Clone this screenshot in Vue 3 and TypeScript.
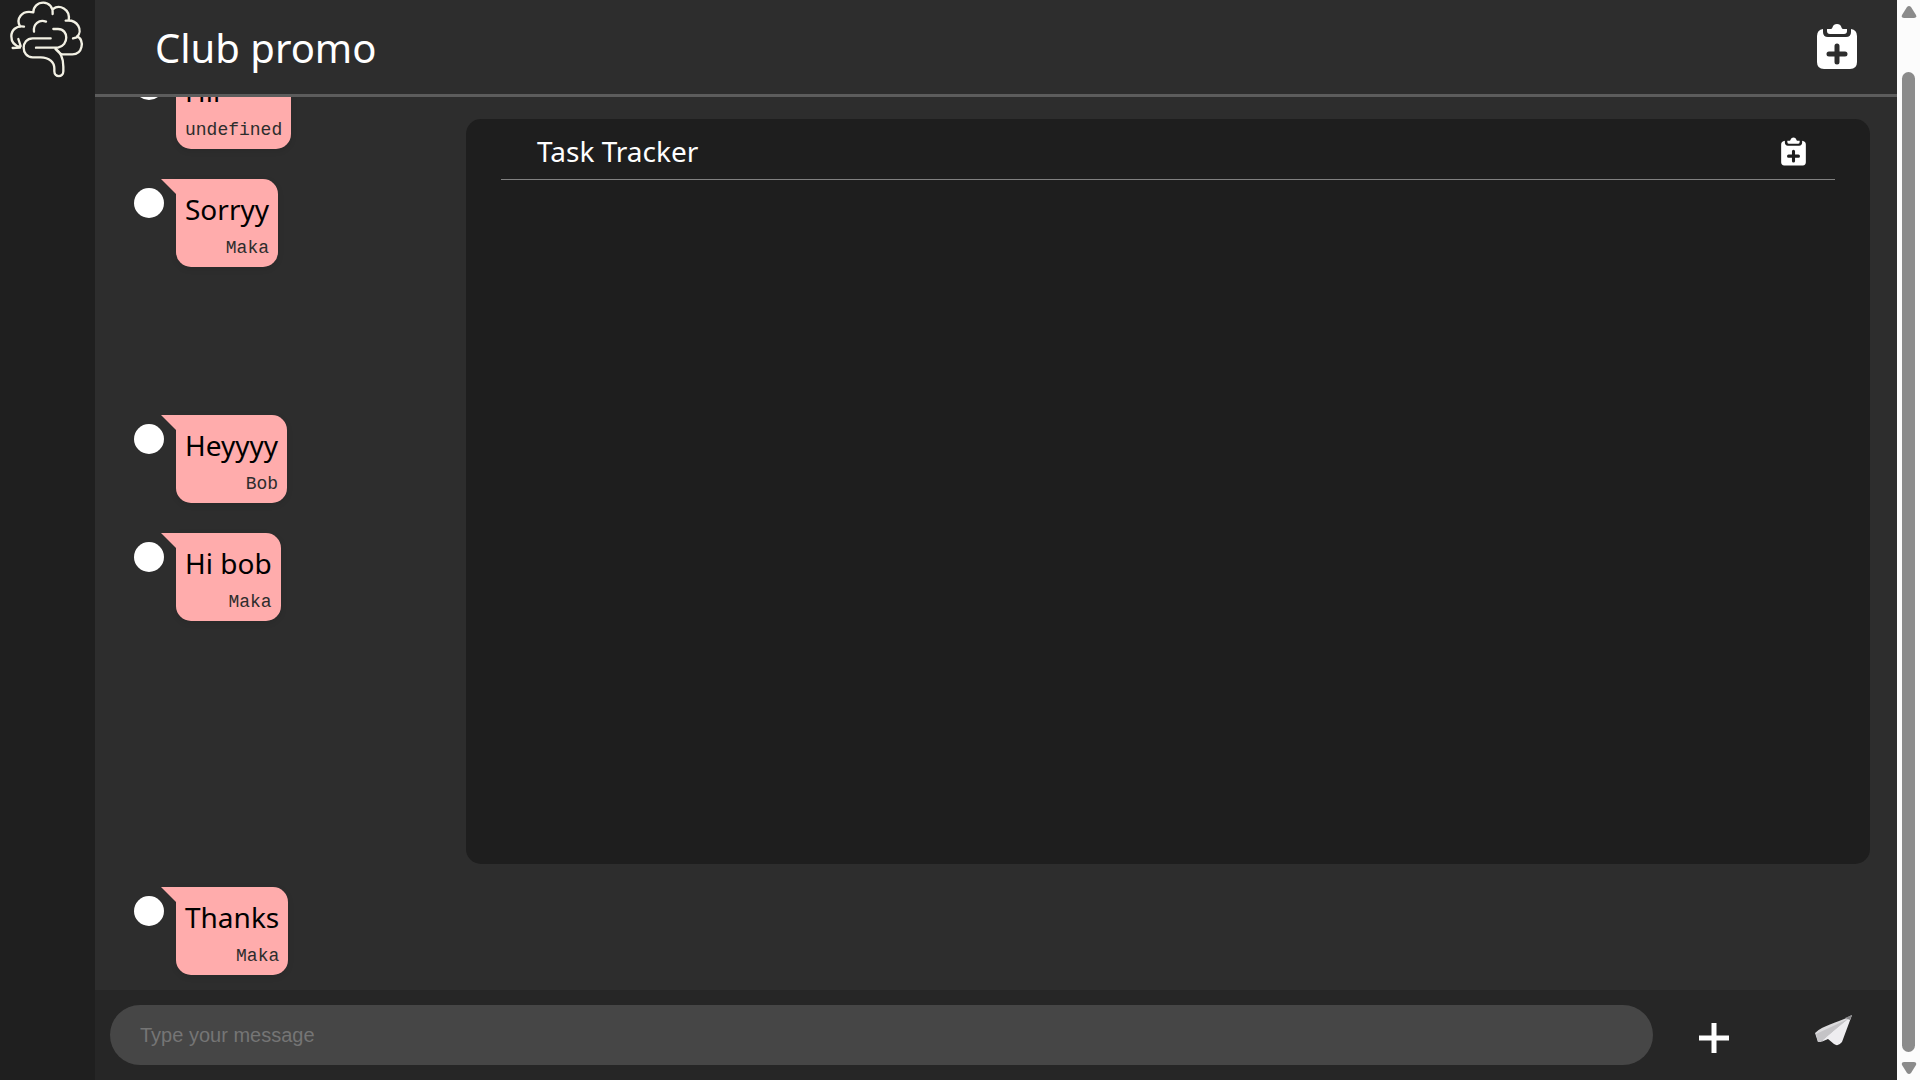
<script setup lang="ts">
import { ref } from 'vue'

interface Message {
  id: number
  text: string
  sender: string
  visible: boolean
}

const messages: Message[] = [
  { id: 1, text: 'Hii', sender: 'undefined', visible: true },
  { id: 2, text: 'Sorryy', sender: 'Maka', visible: true },
  { id: 3, text: '', sender: '', visible: false },
  { id: 4, text: 'Heyyyy', sender: 'Bob', visible: true },
  { id: 5, text: 'Hi bob', sender: 'Maka', visible: true },
  { id: 6, text: '', sender: '', visible: false },
  { id: 7, text: '', sender: '', visible: false },
  { id: 8, text: 'Thanks', sender: 'Maka', visible: true },
]

const draft = ref('')
</script>

<template>
  <div class="app">
    <aside class="sidebar">
      <svg class="logo" viewBox="0 0 285 270" aria-hidden="true">
        <g fill="none" stroke="#f3f1e4" stroke-width="7" stroke-linecap="round" stroke-linejoin="round">
          <path d="M72 80C48 76 34 91 34 109C34 125 43 137 60 141M38 144L60 143M55 117L62 138" />
          <path d="M60 79C48 58 63 29 100 37C100 20 113 8 130 8C147 8 160 22 158 42" />
          <path d="M159 27C177 13 212 25 206 62M197 62C233 57 251 92 230 112L219 115" />
          <path d="M232 109C254 123 248 163 217 163H188C180 163 175 155 167 147" />
          <path d="M102 95C99 73 117 57 138 65" />
          <path d="M160 87H174C207 87 207 137 174 143H108" />
          <path d="M152 115H98C62 115 62 172 98 172H122C148 172 163 187 163 205V214C163 233 190 233 190 214V200C190 177 184 158 167 147" />
        </g>
      </svg>
    </aside>

    <main class="main">
      <header class="header">
        <h1 class="title">Club promo</h1>
        <button class="icon-button" type="button" aria-label="Add task">
          <svg class="clipboard" viewBox="0 0 40 47" aria-hidden="true">
            <path fill="#fff" d="M6 6Q0 7 0 13V39Q0 46 7 46H33Q40 46 40 39V13Q40 7 34 6V9Q34 14 29 14H11Q6 14 6 9Z" />
            <path fill="#fff" d="M10 6H14C16 6 15 1 20 1C25 1 24 6 26 6H30V8Q30 11 27 11H13Q10 11 10 8Z" />
            <path class="cut" d="M20 23V39M12 31H28" />
          </svg>
        </button>
      </header>

      <section class="workspace">
        <ul class="messages">
          <li v-for="m in messages" :key="m.id" class="message">
            <template v-if="m.visible">
              <span class="avatar"></span>
              <div class="bubble">
                <p class="text">{{ m.text }}</p>
                <p class="sender">{{ m.sender }}</p>
              </div>
            </template>
          </li>
        </ul>

        <section class="tracker">
          <div class="tracker-head">
            <h2 class="tracker-title">Task Tracker</h2>
            <button class="icon-button" type="button" aria-label="New task">
              <svg class="clipboard small" viewBox="0 0 40 47" aria-hidden="true">
                <path fill="#fff" d="M6 6Q0 7 0 12V41Q0 46 5 46H35Q40 46 40 41V12Q40 7 34 6V9Q34 14 29 14H11Q6 14 6 9Z" />
                <path fill="#fff" d="M10 6H14C16 6 15 1 20 1C25 1 24 6 26 6H30V8Q30 11 27 11H13Q10 11 10 8Z" />
                <path class="cut" d="M20 23V39M12 31H28" />
              </svg>
            </button>
          </div>
        </section>
      </section>

      <form class="composer" @submit.prevent>
        <input v-model="draft" class="field" type="text" placeholder="Type your message" aria-label="Type your message" />
        <button class="action" type="button" aria-label="Attach">
          <svg width="30" height="30" viewBox="0 0 30 30" aria-hidden="true">
            <path d="M15 0V30M0 15H30" stroke="#fff" stroke-width="5" />
          </svg>
        </button>
        <button class="action" type="submit" aria-label="Send">
          <svg width="60" height="60" viewBox="0 0 60 60" aria-hidden="true">
            <path fill="#dcdbdd" d="M9 25C19 16 30 16 46 7L21 31L12 34Z" />
            <path fill="#c4c3c6" d="M10 26L40 12L15 34L12 34Z" />
            <path fill="#eeedf0" d="M46 7L36 34Q32 39 28 36L22 31L15 34Z" />
            <path fill="none" stroke="#c6c5c8" d="M44 9L17 31" />
            <path fill="#8a898c" d="M39 10L46 7L44 12Z" />
          </svg>
        </button>
      </form>
    </main>

    <div class="scrollbar" aria-hidden="true">
      <svg width="16" height="12" viewBox="0 0 16 12"><path fill="#8b8b8b" d="M6 1Q8 -1 10 1L15 9Q16 12 13 12H3Q0 12 1 9Z" /></svg>
      <div class="thumb"></div>
      <svg width="16" height="12" viewBox="0 0 16 12"><path fill="#8b8b8b" d="M6 11Q8 13 10 11L15 3Q16 0 13 0H3Q0 0 1 3Z" /></svg>
    </div>
  </div>
</template>

<style>
body {
  margin: 0;
  background: #2d2d2d;
}
</style>

<style scoped>
.app {
  display: flex;
  height: 100vh;
  overflow: hidden;
  background: #2d2d2d;
  font-family: "Noto Sans", "Open Sans", sans-serif;
}

.sidebar {
  flex: 0 0 95px;
  background: #1f1f1f;
}

.logo {
  display: block;
  width: 95px;
  height: 90px;
}

.main {
  display: flex;
  flex: 1;
  flex-direction: column;
  min-width: 0;
}

.header {
  display: flex;
  flex: 0 0 94px;
  align-items: center;
  justify-content: space-between;
  padding: 0 40px 0 60px;
  border-bottom: 3px solid #5c5c5c;
}

.title,
.tracker-title {
  margin: 0;
  color: #fff;
  font-weight: 400;
}

.title {
  padding-top: 2px;
  font-size: 40px;
  line-height: 56px;
}

.icon-button,
.action {
  padding: 0;
  border: 0;
  background: none;
  cursor: pointer;
}

.header .icon-button {
  padding-bottom: 2px;
}

.clipboard {
  display: block;
  width: 40px;
  height: 47px;
}

.clipboard.small {
  width: 25px;
  height: 29px;
}

.cut {
  fill: none;
  stroke: #2d2d2d;
  stroke-width: 5;
  stroke-linecap: round;
}

.small .cut {
  stroke: #1e1e1e;
}

.workspace {
  display: flex;
  flex: 1;
  min-height: 0;
}

.messages {
  display: flex;
  flex: 0 0 371px;
  flex-direction: column;
  justify-content: flex-end;
  gap: 30px;
  box-sizing: border-box;
  margin: 0;
  padding: 0 0 15px 39px;
  overflow: hidden;
  list-style: none;
}

.message {
  display: flex;
  flex: 0 0 88px;
  gap: 12px;
}

.avatar {
  width: 30px;
  height: 30px;
  margin-top: 9px;
  border-radius: 50%;
  background: #fff;
}

.bubble {
  position: relative;
  box-sizing: border-box;
  height: 88px;
  padding: 9px;
  border-radius: 0 15px 15px 15px;
  background: #ffacac;
  box-shadow: 0 2px 6px rgba(0, 0, 0, 0.1);
}

.bubble::before {
  position: absolute;
  top: 0;
  left: -15px;
  border-top: 15px solid #ffacac;
  border-left: 15px solid transparent;
  content: "";
}

.text,
.sender {
  margin: 0;
}

.text {
  color: #000;
  font-size: 28px;
  line-height: 42px;
}

.sender {
  color: #2d2d2d;
  font-family: "Liberation Mono", monospace;
  font-size: 18px;
  line-height: 36px;
  text-align: right;
}

.tracker {
  flex: 1;
  margin: 22px 27px 126px 0;
  padding: 0 35px;
  border-radius: 15px;
  background: #1e1e1e;
}

.tracker-head {
  display: flex;
  align-items: center;
  justify-content: space-between;
  height: 60px;
  padding: 0 29px 0 36px;
  border-bottom: 1px solid #808080;
}

.tracker-title {
  padding-top: 4px;
  font-size: 28px;
  line-height: 40px;
}

.tracker-head .icon-button {
  padding-top: 4px;
}

.composer {
  display: flex;
  flex: 0 0 90px;
  align-items: center;
  box-sizing: border-box;
  padding-left: 15px;
  background: #262626;
}

.field {
  flex: 1;
  box-sizing: border-box;
  min-width: 0;
  height: 60px;
  padding: 0 30px;
  border: 0;
  border-radius: 30px;
  outline: 0;
  background: #464646;
  color: #fff;
  font-family: "Liberation Sans", Arial, sans-serif;
  font-size: 20px;
}

.field::placeholder {
  color: #757575;
}

.action {
  display: flex;
  flex: 0 0 122px;
  align-items: center;
  justify-content: center;
  height: 60px;
}

.action svg {
  margin-top: 6px;
}

.scrollbar {
  display: flex;
  flex: 0 0 23px;
  flex-direction: column;
  align-items: center;
  justify-content: space-between;
  box-sizing: border-box;
  padding: 6px 0;
  background: #fcfcfc;
}

.thumb {
  flex: 1;
  width: 13px;
  margin: 54px 0 10px;
  border-radius: 7px;
  background: #8b8b8b;
}
</style>
